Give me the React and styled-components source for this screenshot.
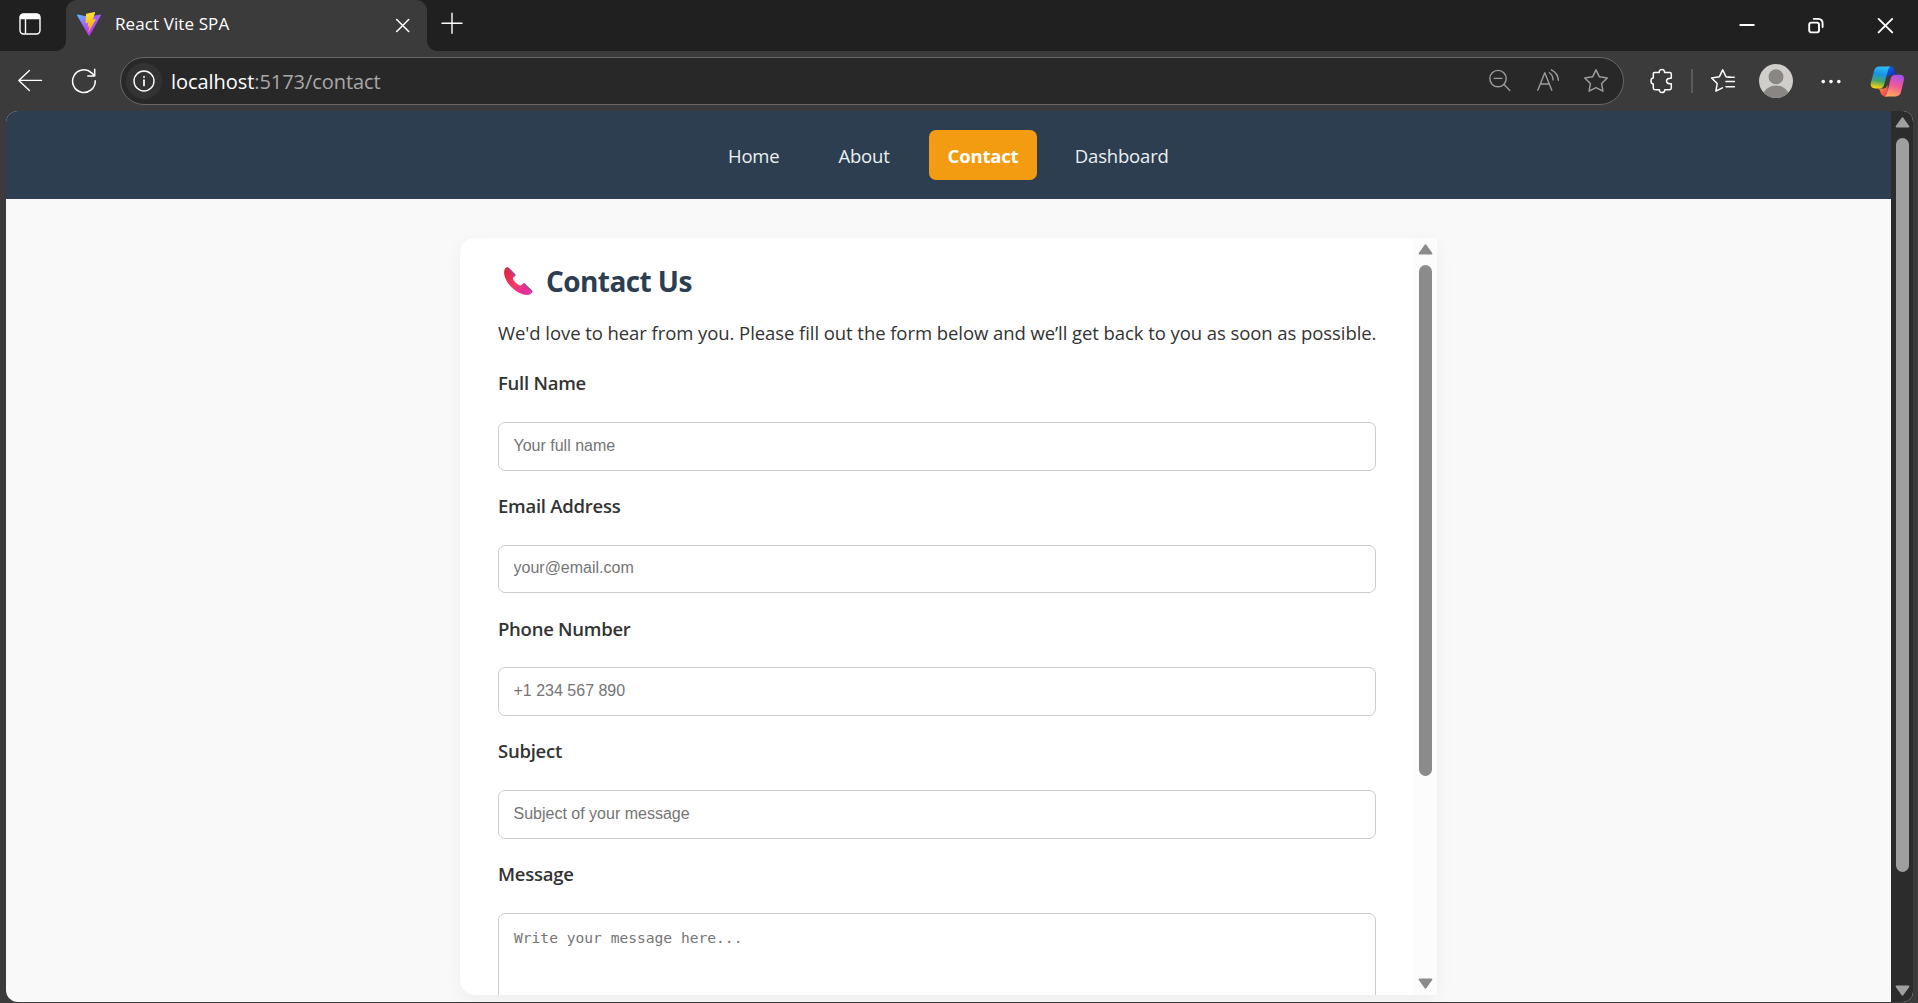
import React from "react";
import styled, { createGlobalStyle } from "styled-components";

const GlobalStyle = createGlobalStyle`
  * { box-sizing: border-box; }
  body {
    margin: 0;
    overflow: hidden;
    background: #3b3b3b;
    font-family: "Open Sans", "Noto Sans", sans-serif;
  }
  svg { display: block; flex: none; }
`;

const Window = styled.div`
  display: flex;
  flex-direction: column;
  width: 1918px;
  height: 1003px;
  overflow: hidden;
  background: #3b3b3b;
`;

/* ---------- tab strip ---------- */

const TabStrip = styled.header`
  display: flex;
  height: 51px;
  flex: none;
  background: #202020;
`;

const TabActions = styled.div`
  width: 66px;
  padding: 13px 0 0 19px;
`;

const Tab = styled.div`
  position: relative;
  display: flex;
  align-items: center;
  width: 361px;
  padding: 0 17px 3px 11px;
  border-radius: 11px 11px 0 0;
  background: #3b3b3b;
  &::before,
  &::after {
    content: "";
    position: absolute;
    bottom: 0;
    width: 10px;
    height: 10px;
  }
  &::before {
    left: -10px;
    background: radial-gradient(circle at 0 0, #202020 9.5px, #3b3b3b 10.2px);
  }
  &::after {
    right: -10px;
    background: radial-gradient(circle at 100% 0, #202020 9.5px, #3b3b3b 10.2px);
  }
`;

const TabTitle = styled.span`
  flex: 1;
  margin-left: 14px;
  color: #fff;
  font-size: 17px;
  line-height: 24px;
  letter-spacing: 0.1px;
  white-space: nowrap;
`;

const NewTab = styled.div`
  padding: 12px 0 0 14px;
`;

const WindowControls = styled.div`
  display: flex;
  gap: 53px;
  margin-left: auto;
  padding: 17px 24px 0 0;
`;

/* ---------- toolbar ---------- */

const Toolbar = styled.div`
  display: flex;
  align-items: center;
  height: 60px;
  flex: none;
  padding: 0 13px 0 17px;
`;

const NavButtons = styled.div`
  display: flex;
  gap: 28px;
  width: 103px;
`;

const AddressBar = styled.div`
  display: flex;
  align-items: center;
  width: 1504px;
  height: 48px;
  padding: 0 14px 0 5px;
  border: 1.5px solid #676767;
  border-radius: 24px;
  background: #282828;
`;

const SiteInfo = styled.span`
  display: grid;
  place-items: center;
  width: 36px;
  height: 36px;
  margin-right: 9px;
  border-radius: 50%;
  background: #333;
`;

const Url = styled.span`
  flex: 1;
  padding-top: 2px;
  color: #a8a8a8;
  font-size: 20px;
  line-height: 28px;
  letter-spacing: -0.06px;
`;

const UrlHost = styled.span`
  color: #fff;
`;

const AddressActions = styled.div`
  display: flex;
  align-items: center;
  gap: 23.5px;
`;

const BrowserActions = styled.div`
  display: grid;
  grid-template-columns: 42px 18.5px 49.5px 61.5px 49.5px 35px;
  align-items: center;
  margin-left: 25px;
`;

const Divider = styled.i`
  width: 2px;
  height: 24px;
  background: #5b5b5b;
`;

/* ---------- page viewport ---------- */

const Viewport = styled.div`
  display: flex;
  width: 1907px;
  height: 891px;
  margin-left: 6px;
  overflow: hidden;
  border-radius: 12px 10px 10px 12px;
  background: #f9f9f9;
`;

const Page = styled.div`
  display: flex;
  flex-direction: column;
  align-items: center;
  width: 1885px;
`;

const SiteNav = styled.nav`
  display: flex;
  align-items: center;
  justify-content: center;
  gap: 19.5px;
  width: 100%;
  height: 88px;
  flex: none;
  padding-right: 1.5px;
  background: #2c3e50;
`;

const NavLink = styled.a`
  display: flex;
  align-items: center;
  justify-content: center;
  width: ${(p) => p.$width}px;
  height: 50px;
  padding-top: 1.5px;
  border-radius: 7px;
  background: ${(p) => (p.$active ? "#f39c12" : "transparent")};
  color: ${(p) => (p.$active ? "#fff" : "#ecf0f1")};
  font-size: 18.5px;
  font-weight: ${(p) => (p.$active ? 700 : 400)};
  line-height: 30px;
  letter-spacing: -0.18px;
`;

const Card = styled.main`
  display: flex;
  width: 977px;
  height: 757px;
  margin-top: 39px;
  overflow: hidden;
  border-radius: 15px 0 0 15px;
  background: #fff;
  box-shadow: 0 5px 18px rgba(0, 0, 0, 0.05);
`;

const CardBody = styled.div`
  flex: 1;
  min-width: 0;
  padding: 23.4px 38px 0;
  overflow: hidden;
`;

const Heading = styled.h2`
  display: flex;
  align-items: center;
  gap: 13px;
  height: 40px;
  margin: 0 0 16.4px;
  padding-left: 5px;
  color: #2c3e50;
  font-size: 28px;
  font-weight: 700;
  line-height: 40px;
  letter-spacing: -0.58px;
`;

const Intro = styled.p`
  margin: 0 0 20.4px;
  color: #333;
  font-size: 18.5px;
  line-height: 30px;
  letter-spacing: -0.07px;
  white-space: nowrap;
`;

const Form = styled.form`
  display: flex;
  flex-direction: column;
  gap: 20.2px;
`;

const Field = styled.label`
  display: flex;
  flex-direction: column;
  gap: 23.8px;
`;

const FieldLabel = styled.span`
  color: #333;
  font-size: 18.5px;
  font-weight: 600;
  line-height: 30px;
  letter-spacing: -0.26px;
`;

const Input = styled.input`
  display: block;
  width: 878px;
  height: 48.7px;
  padding: 0 15px 1px 14.5px;
  border: 1px solid #ccc;
  border-radius: 7px;
  background: #fff;
  font: 16px "Liberation Sans", sans-serif;
  &::placeholder {
    color: #757575;
  }
`;

const TextArea = styled.textarea`
  display: block;
  width: 878px;
  height: 150px;
  padding: 14px 15px;
  border: 1px solid #ccc;
  border-radius: 7px;
  background: #fff;
  font: 14.6px/20px "DejaVu Sans Mono", monospace;
  resize: none;
  overflow: hidden;
  &::placeholder {
    color: #757575;
  }
`;

/* ---------- scrollbars ---------- */

const Track = styled.div`
  display: flex;
  flex-direction: column;
  align-items: center;
  width: ${(p) => p.$width}px;
  flex: none;
  padding: 6px 0;
  background: ${(p) => p.$track};
  color: ${(p) => p.$thumb};
`;

const Thumb = styled.div`
  width: 13px;
  height: ${(p) => p.$height}px;
  margin: 10px 0 auto;
  border-radius: 7px;
  background: currentColor;
`;

const Arrow = ({ down }) => (
  <svg width="15" height="11" viewBox="0 0 15 11" fill="currentColor" stroke="currentColor" strokeWidth="2" strokeLinejoin="round">
    <path d={down ? "M1.6 1.5H13.4L7.5 9.6Z" : "M1.6 9.5H13.4L7.5 1.4Z"} />
  </svg>
);

const Scrollbar = ({ width, track, thumb, height }) => (
  <Track $width={width} $track={track} $thumb={thumb}>
    <Arrow />
    <Thumb $height={height} />
    <Arrow down />
  </Track>
);

/* ---------- icons ---------- */

const LoweredSvg = styled.svg`
  margin-top: ${(p) => p.$drop}px;
`;

const stroke = (color, width) => ({
  fill: "none",
  stroke: color,
  strokeWidth: width,
  strokeLinecap: "round",
  strokeLinejoin: "round",
});

const TabMenuIcon = () => (
  <svg width="22" height="22" viewBox="0 0 22 22" {...stroke("#fff", 1.4)}>
    <rect x="1" y="1" width="20" height="20" rx="3.5" />
    <path d="M1.5 5.5V4Q1.5 1.5 4 1.5H18Q20.5 1.5 20.5 4V5.5Z" fill="#fff" />
    <path d="M6.5 6V20.5" />
  </svg>
);

const ViteIcon = () => (
  <svg width="24" height="24" viewBox="0 0 24 24">
    <defs>
      <linearGradient id="viteBody" x1="0" y1="0" x2="14" y2="20" gradientUnits="userSpaceOnUse">
        <stop offset="0" stopColor="#41d1ff" />
        <stop offset="0.55" stopColor="#9a6bff" />
        <stop offset="1" stopColor="#bd34fe" />
      </linearGradient>
      <linearGradient id="viteBolt" x1="11" y1="0" x2="14" y2="18" gradientUnits="userSpaceOnUse">
        <stop offset="0" stopColor="#ffe83d" />
        <stop offset="1" stopColor="#ffa800" />
      </linearGradient>
    </defs>
    <path d="M0.6 2.6L11.9 4.7L23.4 2.6Q24.2 2.7 23.9 3.5L12.6 23.5Q12.1 24.2 11.6 23.5L0.1 3.5Q-0.1 2.7 0.6 2.6Z" fill="url(#viteBody)" />
    <path d="M17.7 0.1L9.4 1.7Q9 1.8 9 2.2L8.5 10.8Q8.5 11.3 9 11.2L11.3 10.7L10.6 14.4Q10.6 14.8 11 14.7L12.5 14.3L11.4 19.6Q11.5 20.4 12 19.8L18.6 7.6Q18.7 7.1 18.2 7.1L15.8 7.6L18.1 0.6Q18.2 0.1 17.7 0.1Z" fill="url(#viteBolt)" />
  </svg>
);

const CloseTabIcon = () => (
  <LoweredSvg $drop={2} width="15" height="15" viewBox="0 0 15 15" {...stroke("#fff", 1.6)}>
    <path d="M1.7 1.5L13.7 13.5M13.7 1.5L1.7 13.5" />
  </LoweredSvg>
);

const PlusIcon = () => (
  <svg width="23" height="23" viewBox="0 0 23 23" {...stroke("#fff", 1.4)}>
    <path d="M11 1.3V21.3M1 11.3H21" />
  </svg>
);

const MinimizeIcon = () => (
  <svg width="16" height="17" viewBox="0 0 16 17">
    <path d="M0.5 8H15.5" stroke="#fff" strokeWidth="2" />
  </svg>
);

const RestoreIcon = () => (
  <svg width="16" height="17" viewBox="0 0 16 17" {...stroke("#fff", 1.9)}>
    <rect x="1.2" y="5.6" width="9.8" height="9.8" rx="2.2" />
    <path d="M5.8 1.9H10.2Q14.6 2 14.6 6.4V10" />
  </svg>
);

const CloseWindowIcon = () => (
  <svg width="17" height="17" viewBox="0 0 17 17" {...stroke("#fff", 1.9)}>
    <path d="M1.6 1.9L15.2 15.4M15.2 1.9L1.6 15.4" />
  </svg>
);

const BackIcon = () => (
  <LoweredSvg $drop={1} width="26" height="24" viewBox="0 0 26 24" {...stroke("#fff", 1.4)}>
    <path d="M24.5 11.4H1.8M12.4 1.5L1.8 11.4L12.4 21.5" />
  </LoweredSvg>
);

const ReloadIcon = () => (
  <svg width="26" height="26" viewBox="0 0 26 26" {...stroke("#fff", 1.5)}>
    <path d="M24.2 12.8A11.3 11.3 0 1 1 20.6 4.9L23.7 7.8M23.7 1.2V8.1H16.8" />
  </svg>
);

const InfoIcon = () => (
  <svg width="22" height="22" viewBox="0 0 22 22" {...stroke("#fff", 1.4)}>
    <circle cx="11" cy="11" r="10" />
    <path d="M11 10.2V15.4" strokeWidth="1.7" />
    <circle cx="11" cy="7" r="1" fill="#fff" stroke="none" />
  </svg>
);

const ZoomOutIcon = () => (
  <svg width="24" height="24" viewBox="0 0 24 24" {...stroke("#9c9c9c", 1.4)}>
    <circle cx="10" cy="9.6" r="8.2" />
    <path d="M6.2 9.4H13.8M16 15.6L21.8 21.4" />
  </svg>
);

const ReadAloudIcon = () => (
  <svg width="24" height="24" viewBox="0 0 24 24" {...stroke("#9c9c9c", 1.4)}>
    <path d="M1.8 21.3L8.8 3.8L15.8 21.3M4.3 15H13.3" />
    <path d="M13.4 3.8Q17 6.4 17 10.9M15.4 0.8Q21.8 3.8 22.4 11.3" />
  </svg>
);

const StarIcon = () => (
  <svg width="26" height="26" viewBox="0 0 26 26" {...stroke("#9c9c9c", 1.5)}>
    <path d="M13 1.8L16.4 8.8L24.3 10L18.6 15.5L19.9 23.2L13 19.6L6.1 23.2L7.4 15.5L1.7 10L9.6 8.8Z" />
  </svg>
);

const ExtensionsIcon = () => (
  <svg width="24" height="26" viewBox="0 0 24 26" {...stroke("#fff", 1.5)}>
    <path d="M5.2 4.5H10.2C10.1 2.7 11.2 1.4 12.9 1.4S15.7 2.7 15.6 4.5H20.8Q22.3 4.5 22.3 6.2V10.3C19.5 9.9 17.5 11 17.5 13S19.5 16.1 22.3 15.7V20Q22.3 21.7 20.6 21.7H15.8C15.8 23.5 14.7 24.6 13 24.6S10.3 23.5 10.4 21.7H5.9Q4.3 21.7 4.3 20V15.9C2.9 15.9 2 14.6 2 13S2.9 10.1 4.3 10.1V5.9Q4.3 4.5 5.2 4.5Z" />
  </svg>
);

const FavoritesIcon = () => (
  <svg width="26" height="26" viewBox="0 0 26 26" {...stroke("#fff", 1.5)}>
    <path d="M19.6 9.2L16 8.8L12.7 1.8L9.3 8.8L1.6 10L7.2 15.5L5.9 23.2L12.4 19.8" />
    <path d="M18.4 9.2H24.2M16 13.6H24.4M16 18.8H24.4" />
  </svg>
);

const Avatar = () => (
  <svg width="34" height="34" viewBox="0 0 34 34">
    <defs>
      <clipPath id="avatarClip"><circle cx="17" cy="17" r="17" /></clipPath>
    </defs>
    <g clipPath="url(#avatarClip)">
      <rect width="34" height="34" fill="#d0cecb" />
      <circle cx="17" cy="12.8" r="7.5" fill="#8a8683" />
      <ellipse cx="17" cy="33" rx="13" ry="11.5" fill="#8a8683" />
    </g>
  </svg>
);

const MoreIcon = () => (
  <svg width="20" height="6" viewBox="0 0 20 6" fill="#fff">
    <circle cx="2.2" cy="3.6" r="1.8" />
    <circle cx="10" cy="3.6" r="1.8" />
    <circle cx="17.8" cy="3.6" r="1.8" />
  </svg>
);

const CopilotIcon = () => (
  <svg width="35" height="31" viewBox="0 0 35 31">
    <defs>
      <linearGradient id="cpLeft" x1="11" y1="0" x2="7" y2="23" gradientUnits="userSpaceOnUse">
        <stop offset="0" stopColor="#35bdf5" />
        <stop offset="0.35" stopColor="#1694e8" />
        <stop offset="0.65" stopColor="#45a56b" />
        <stop offset="0.95" stopColor="#f7d40c" />
      </linearGradient>
      <linearGradient id="cpTop" x1="18" y1="1" x2="24" y2="9" gradientUnits="userSpaceOnUse">
        <stop offset="0" stopColor="#1268de" />
        <stop offset="1" stopColor="#1530b8" />
      </linearGradient>
      <linearGradient id="cpRight" x1="28" y1="8" x2="21" y2="31" gradientUnits="userSpaceOnUse">
        <stop offset="0" stopColor="#a450ee" />
        <stop offset="0.5" stopColor="#f0579b" />
        <stop offset="1" stopColor="#ffae58" />
      </linearGradient>
      <linearGradient id="cpBottom" x1="9" y1="22" x2="16" y2="30" gradientUnits="userSpaceOnUse">
        <stop offset="0" stopColor="#ff8a38" />
        <stop offset="1" stopColor="#e9415a" />
      </linearGradient>
    </defs>
    <path d="M17 0.6H21Q23.5 0.6 24.5 4L25.4 7Q26 8.8 28 8.8H22Q18 8.8 17 12.5Z" fill="url(#cpTop)" />
    <path d="M18 30.4H15Q11.6 30.4 10.5 26.6L9.7 24Q9.2 22.4 7 22.4H13.5Q16.5 22.4 17.5 18.5Z" fill="url(#cpBottom)" />
    <path d="M9.5 0.6H21Q18.9 0.8 18 4.2L14.2 18.4Q13.2 22.4 9 22.4H5Q-0.3 22.4 1 16.5L4 5Q5.2 0.6 9.5 0.6Z" fill="url(#cpLeft)" />
    <path d="M25.5 30.4H14.2Q16.3 30.2 17.2 26.8L20.6 12.8Q21.6 8.8 25.6 8.8H29.7Q35 8.8 33.7 14.7L31 26Q29.8 30.4 25.5 30.4Z" fill="url(#cpRight)" />
  </svg>
);

const PhoneIcon = () => (
  <svg width="30" height="30" viewBox="0 0 30 30">
    <defs>
      <linearGradient id="phoneBody" x1="3" y1="3" x2="27" y2="29" gradientUnits="userSpaceOnUse">
        <stop offset="0" stopColor="#dc2440" />
        <stop offset="0.5" stopColor="#ee3d68" />
        <stop offset="0.8" stopColor="#ec2a96" />
        <stop offset="1" stopColor="#e23fb0" />
      </linearGradient>
    </defs>
    <path d="M1.6 3.4Q3.2 0.4 5.4 1.4L12.2 8.3Q12.8 9.4 11.8 10.2L10 11.6Q9.5 13.4 12.5 16.6Q15.7 19.8 17.9 19.4L20.2 17.6Q21.2 16.9 22 17.7L29 24.4Q30 26 27.8 28Q22.5 31 13 24.9Q5 19.5 2 11.5Q0.4 6.5 1.6 3.4Z" fill="url(#phoneBody)" />
    <path d="M4 1.4Q5 1 5.6 1.7L12.2 8.3Q12.8 9.4 11.8 10.2L11.2 10.6ZM20.4 17.5Q21.2 16.9 22 17.7L29 24.4Q29.5 25.2 29 26.4L19.6 18.1Z" fill="#a9489f" />
  </svg>
);

/* ---------- content ---------- */

const links = [
  { label: "Home", width: 90.5 },
  { label: "About", width: 91 },
  { label: "Contact", width: 108, active: true },
  { label: "Dashboard", width: 130.5 },
];

const fields = [
  { label: "Full Name", placeholder: "Your full name", type: "text" },
  { label: "Email Address", placeholder: "your@email.com", type: "email" },
  { label: "Phone Number", placeholder: "+1 234 567 890", type: "tel" },
  { label: "Subject", placeholder: "Subject of your message", type: "text" },
];

export default function App() {
  return (
    <>
      <GlobalStyle />
      <Window>
        <TabStrip>
          <TabActions><TabMenuIcon /></TabActions>
          <Tab>
            <ViteIcon />
            <TabTitle>React Vite SPA</TabTitle>
            <CloseTabIcon />
          </Tab>
          <NewTab><PlusIcon /></NewTab>
          <WindowControls>
            <MinimizeIcon />
            <RestoreIcon />
            <CloseWindowIcon />
          </WindowControls>
        </TabStrip>

        <Toolbar>
          <NavButtons>
            <BackIcon />
            <ReloadIcon />
          </NavButtons>
          <AddressBar>
            <SiteInfo><InfoIcon /></SiteInfo>
            <Url><UrlHost>localhost</UrlHost>:5173/contact</Url>
            <AddressActions>
              <ZoomOutIcon />
              <ReadAloudIcon />
              <StarIcon />
            </AddressActions>
          </AddressBar>
          <BrowserActions>
            <ExtensionsIcon />
            <Divider />
            <FavoritesIcon />
            <Avatar />
            <MoreIcon />
            <CopilotIcon />
          </BrowserActions>
        </Toolbar>

        <Viewport>
          <Page>
            <SiteNav>
              {links.map((l) => (
                <NavLink key={l.label} $width={l.width} $active={l.active}>{l.label}</NavLink>
              ))}
            </SiteNav>
            <Card>
              <CardBody>
                <Heading><PhoneIcon />Contact Us</Heading>
                <Intro>
                  We'd love to hear from you. Please fill out the form below and we’ll get back to you as soon as possible.
                </Intro>
                <Form>
                  {fields.map((f) => (
                    <Field key={f.label}>
                      <FieldLabel>{f.label}</FieldLabel>
                      <Input type={f.type} placeholder={f.placeholder} />
                    </Field>
                  ))}
                  <Field>
                    <FieldLabel>Message</FieldLabel>
                    <TextArea placeholder="Write your message here..." />
                  </Field>
                </Form>
              </CardBody>
              <Scrollbar width={23} track="#fcfcfc" thumb="#8b8b8b" height={511} />
            </Card>
          </Page>
          <Scrollbar width={22} track="#2c2c2c" thumb="#9f9f9f" height={734} />
        </Viewport>
      </Window>
    </>
  );
}
